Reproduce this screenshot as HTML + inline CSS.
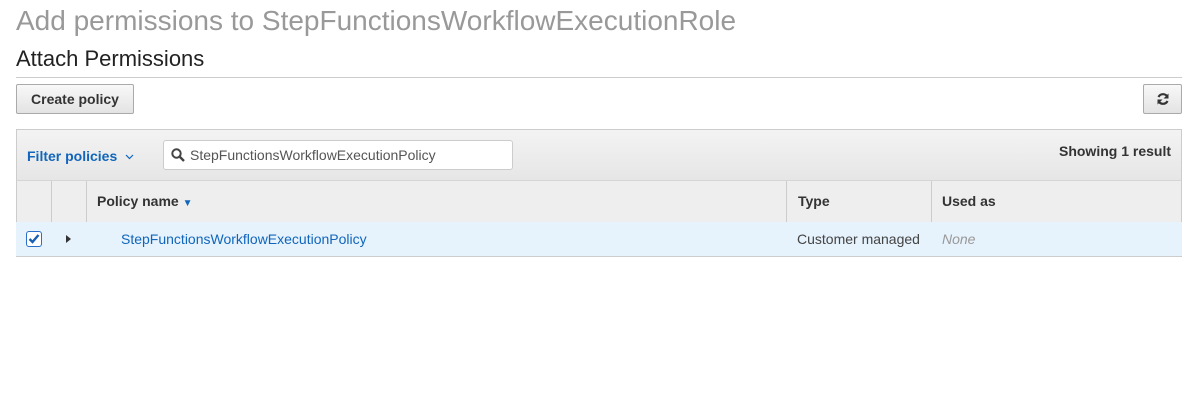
<!DOCTYPE html>
<html><head><style>
*{box-sizing:border-box;margin:0;padding:0}
body{width:1204px;height:402px;background:#fff;font-family:"Liberation Sans",Arial,sans-serif;color:#444;position:relative;overflow:hidden}
.abs{position:absolute}
h1{position:absolute;left:16px;top:5px;font-size:28px;font-weight:normal;color:#999;white-space:nowrap}
h2{position:absolute;left:16px;top:46px;font-size:22px;font-weight:normal;color:#222}
.hr{left:16px;top:77px;width:1166px;height:1px;background:#ccc}
.btn{border:1px solid #aaa;border-radius:2px;background:linear-gradient(#f8f8f8,#e3e3e3);font-weight:bold;font-size:14px;color:#333;display:flex;align-items:center;justify-content:center}
.bar{left:16px;top:129px;width:1166px;height:52px;border:1px solid #ccc;background:linear-gradient(#f3f3f3,#e6e6e6)}
.hdr{left:16px;top:180px;width:1166px;height:43px;border:1px solid #ccc;border-top:1px solid #d5d5d5;background:#eee}
.row{left:16px;top:222px;width:1166px;height:35px;background:#e6f2fc;border-bottom:1px solid #ccc}
.vl{position:absolute;top:0;width:1px;height:100%;background:#ccc}
.th{position:absolute;top:12px;font-weight:bold;font-size:14px;color:#333}
.td{position:absolute;top:9px;font-size:14px}
</style></head><body>
<h1>Add permissions to StepFunctionsWorkflowExecutionRole</h1>
<h2>Attach Permissions</h2>
<div class="abs hr"></div>
<div class="abs btn" style="left:16px;top:84px;width:118px;height:30px">Create policy</div>
<div class="abs btn" style="left:1143px;top:84px;width:39px;height:30px">
<svg width="14" height="14" viewBox="0 0 14 14"><path d="M11.5 5A5 5 0 0 0 2.5 5M2.5 9A5 5 0 0 0 11.5 9" stroke="#333" stroke-width="2.2" fill="none"/><path d="M12.5 1.5v5h-5zM1.5 12.5v-5h5z" fill="#333"/></svg></div>
<div class="abs bar">
<div style="position:absolute;left:10px;top:18px;font-size:14px;font-weight:bold;color:#1166bb">Filter policies</div>
<svg style="position:absolute;left:108px;top:24px" width="9" height="6" viewBox="0 0 9 6"><path d="M1 1l3.5 3.5L8 1" stroke="#1166bb" stroke-width="1.2" fill="none"/></svg>
<div style="position:absolute;left:146px;top:10px;width:350px;height:30px;background:#fff;border:1px solid #ccc;border-radius:3px">
<svg style="position:absolute;left:7px;top:7px" width="14" height="14" viewBox="0 0 14 14"><circle cx="5.5" cy="5.5" r="4.2" stroke="#444" stroke-width="2" fill="none"/><path d="M8.5 8.5L13 13" stroke="#444" stroke-width="2.4"/></svg>
<span style="position:absolute;left:26px;top:6px;font-size:14px;color:#555">StepFunctionsWorkflowExecutionPolicy</span></div>
<div style="position:absolute;right:10px;top:13px;font-size:14px;font-weight:bold;color:#333">Showing 1 result</div>
</div>
<div class="abs hdr">
<div class="vl" style="left:34px"></div><div class="vl" style="left:69px"></div><div class="vl" style="left:769px"></div><div class="vl" style="left:914px"></div>
<div class="th" style="left:80px">Policy name <span style="color:#1166bb;font-size:10px">&#9660;</span></div>
<div class="th" style="left:781px">Type</div>
<div class="th" style="left:925px">Used as</div>
</div>
<div class="abs row">
<div style="position:absolute;left:10px;top:9px;width:16px;height:16px;border:1px solid #2a6fc7;border-radius:3px;background:#fff"><svg width="14" height="14" viewBox="0 0 14 14"><path d="M2.5 7l3 3 6-7" stroke="#1a5fb4" stroke-width="2.4" fill="none"/></svg></div>
<div style="position:absolute;left:50px;top:13px;width:0;height:0;border-left:5px solid #333;border-top:4px solid transparent;border-bottom:4px solid transparent"></div>
<div class="td" style="left:105px;color:#1166bb">StepFunctionsWorkflowExecutionPolicy</div>
<div class="td" style="left:781px;color:#444">Customer managed</div>
<div class="td" style="left:926px;color:#999;font-style:italic">None</div>
</div>
</body></html>
